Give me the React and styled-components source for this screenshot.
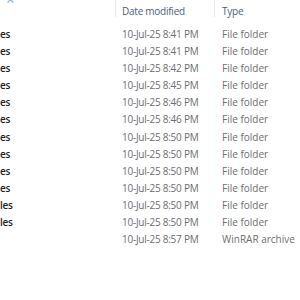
import React from "react";
import styled, { createGlobalStyle } from "styled-components";

const GlobalStyle = createGlobalStyle`
  html, body {
    margin: 0;
    padding: 0;
    background: #ffffff;
  }
  body {
    font-family: "Open Sans", "Noto Sans", sans-serif;
  }
`;

const rows = [
  { name: "es", date: "10-Jul-25 8:41 PM", type: "File folder" },
  { name: "es", date: "10-Jul-25 8:41 PM", type: "File folder" },
  { name: "es", date: "10-Jul-25 8:42 PM", type: "File folder" },
  { name: "es", date: "10-Jul-25 8:45 PM", type: "File folder" },
  { name: "es", date: "10-Jul-25 8:46 PM", type: "File folder" },
  { name: "es", date: "10-Jul-25 8:46 PM", type: "File folder" },
  { name: "es", date: "10-Jul-25 8:50 PM", type: "File folder" },
  { name: "es", date: "10-Jul-25 8:50 PM", type: "File folder" },
  { name: "es", date: "10-Jul-25 8:50 PM", type: "File folder" },
  { name: "es", date: "10-Jul-25 8:50 PM", type: "File folder" },
  { name: "les", date: "10-Jul-25 8:50 PM", type: "File folder" },
  { name: "les", date: "10-Jul-25 8:50 PM", type: "File folder" },
  { name: "", date: "10-Jul-25 8:57 PM", type: "WinRAR archive" },
];

const SortArrow = () => (
  <svg width="7" height="4" viewBox="0 0 7 4">
    <path d="M0.5 3.5 L3.5 0.5 L6.5 3.5" fill="none" stroke="#8fb4d8" strokeWidth="1.2" />
  </svg>
);

const App = () => {
  return (
    <>
      <GlobalStyle />
      <Explorer>
        <Header>
          <HeadCell $width={116}>
            <ArrowSlot>
              <SortArrow />
            </ArrowSlot>
          </HeadCell>
          <HeadCell $width={99}>Date modified</HeadCell>
          <HeadCell $width={100} $last>
            Type
          </HeadCell>
        </Header>
        <List>
          {rows.map((r, i) => (
            <Row key={i}>
              <NameCell>{r.name}</NameCell>
              <InfoCell $width={99}>{r.date}</InfoCell>
              <InfoCell $width={100} $wide>
                {r.type}
              </InfoCell>
            </Row>
          ))}
        </List>
      </Explorer>
    </>
  );
};

export default App;

const Explorer = styled.div`
  width: 300px;
  height: 300px;
  overflow: hidden;
  background: #ffffff;
  font-size: 10px;
  letter-spacing: -0.25px;
`;

const Header = styled.div`
  display: flex;
  height: 17px;
`;

const HeadCell = styled.div`
  position: relative;
  flex: 0 0 ${(p) => p.$width}px;
  box-sizing: border-box;
  padding-left: ${(p) => (p.$last ? 7 : 6)}px;
  padding-top: 3px;
  line-height: 16px;
  color: #4c607a;
  white-space: nowrap;
  border-right: ${(p) => (p.$last ? "none" : "1px solid #e6ebf1")};
`;

const ArrowSlot = styled.div`
  position: absolute;
  left: 7px;
  top: -1px;
  line-height: 0;
`;

const List = styled.div`
  display: flex;
  flex-direction: column;
  padding-top: 8px;
`;

const Row = styled.div`
  display: flex;
  height: 17.17px;
  align-items: center;
  white-space: nowrap;
`;

const NameCell = styled.div`
  flex: 0 0 116px;
  color: #1e1e1e;
  font-weight: 600;
  overflow: hidden;
`;

const InfoCell = styled.div`
  flex: 0 0 ${(p) => p.$width}px;
  box-sizing: border-box;
  padding-left: ${(p) => (p.$wide ? 7 : 6)}px;
  letter-spacing: ${(p) => (p.$wide ? "0" : "-0.25px")};
  color: #6d6d6d;
`;
